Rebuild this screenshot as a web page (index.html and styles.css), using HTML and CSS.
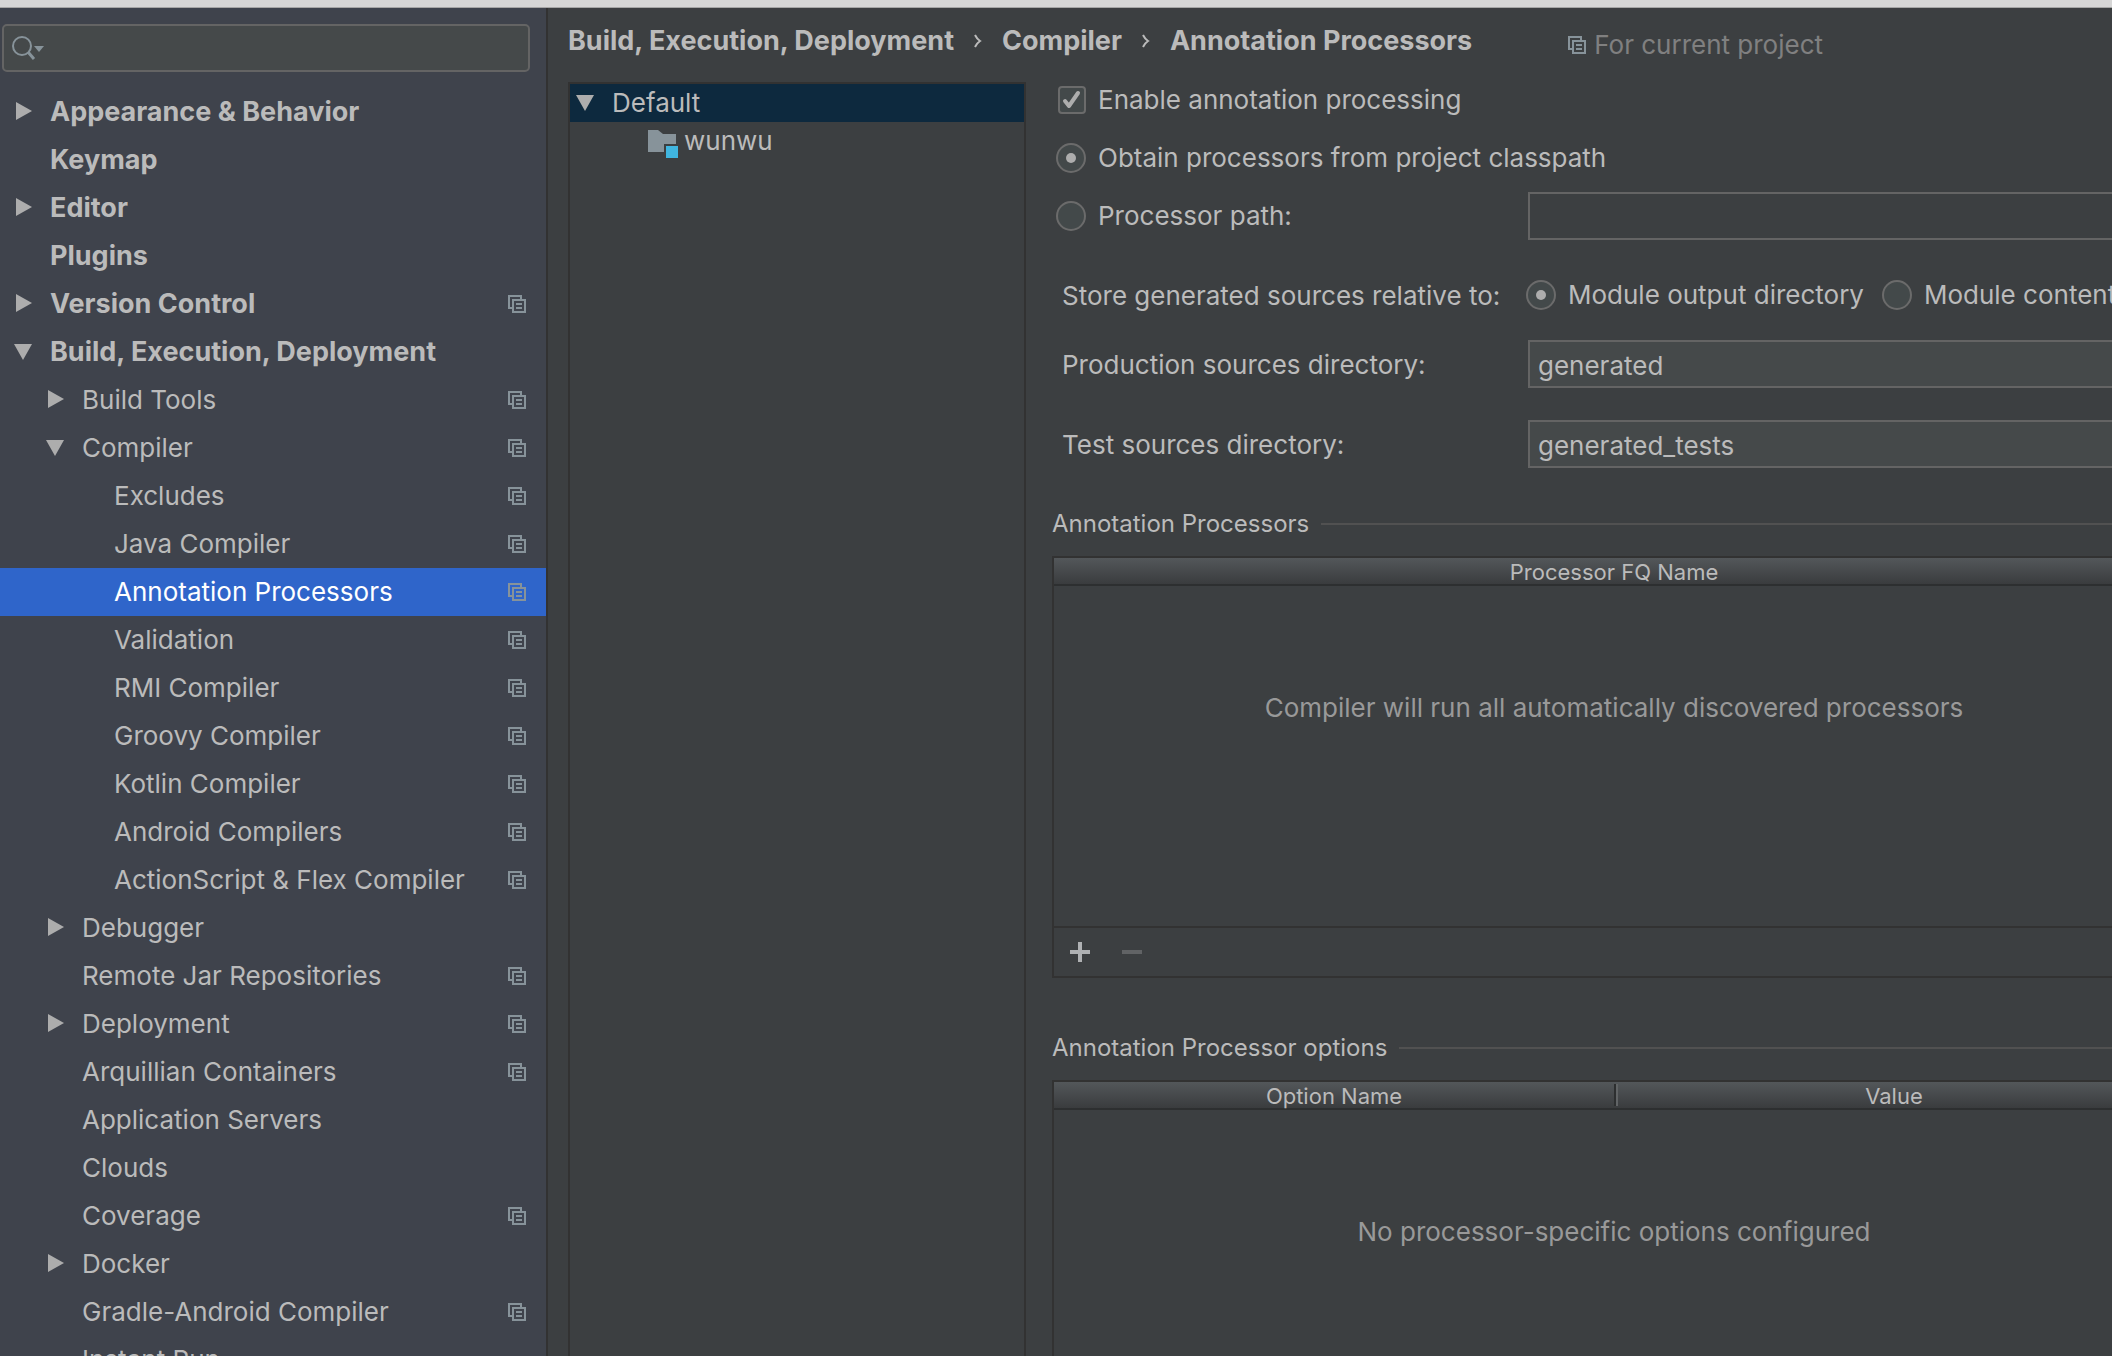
FILE: index.html
```html
<!DOCTYPE html>
<html lang="en">
<head>
<meta charset="utf-8">
<title>Preferences</title>
<link rel="stylesheet" href="styles.css">
</head>
<body>
<svg class="defs" aria-hidden="true">
  <symbol id="right" viewBox="0 0 20 20"><path d="M2 0L18 9L2 18Z" fill="#adadad"/></symbol>
  <symbol id="down" viewBox="0 0 20 20"><path d="M0 2H18L9 18Z" fill="#adadad"/></symbol>
  <symbol id="copy" viewBox="0 0 18 18"><path d="M4 13H1V1H13V4M5 5H17V17H5ZM8 9H14M8 13H14" fill="none" stroke="currentColor" stroke-width="2"/></symbol>
  <symbol id="chevron" viewBox="0 0 8 14"><path d="M1 1Q3 5 6 7Q3 9 1 13" fill="none" stroke="#bbbbbb" stroke-width="2"/></symbol>
</svg>
<div class="titlebar"></div>
<div class="window">
  <aside class="sidebar">
    <div class="search">
      <svg class="search-icon" viewBox="0 0 32 26" aria-hidden="true"><circle cx="10" cy="11" r="9" fill="none" stroke="#87939a" stroke-width="2"/><path d="M16 17L22 24" stroke="#87939a" stroke-width="3"/><path d="M22 11H32L27 17Z" fill="#87939a"/></svg>
      <input class="search-input" type="text" aria-label="Search settings">
    </div>
    <nav class="tree" aria-label="Settings">
      <a class="item top" href="#"><svg class="arrow"><use href="#right"/></svg><span>Appearance &amp; Behavior</span></a>
      <a class="item top" href="#"><i class="arrow"></i><span>Keymap</span></a>
      <a class="item top" href="#"><svg class="arrow"><use href="#right"/></svg><span>Editor</span></a>
      <a class="item top" href="#"><i class="arrow"></i><span>Plugins</span></a>
      <a class="item top" href="#"><svg class="arrow"><use href="#right"/></svg><span>Version Control</span><svg class="copy"><use href="#copy"/></svg></a>
      <a class="item top" href="#"><svg class="arrow"><use href="#down"/></svg><span>Build, Execution, Deployment</span></a>
      <a class="item child" href="#"><svg class="arrow"><use href="#right"/></svg><span>Build Tools</span><svg class="copy"><use href="#copy"/></svg></a>
      <a class="item child" href="#"><svg class="arrow"><use href="#down"/></svg><span>Compiler</span><svg class="copy"><use href="#copy"/></svg></a>
      <a class="item leaf" href="#"><span>Excludes</span><svg class="copy"><use href="#copy"/></svg></a>
      <a class="item leaf" href="#"><span>Java Compiler</span><svg class="copy"><use href="#copy"/></svg></a>
      <a class="item leaf selected" href="#" aria-current="page"><span>Annotation Processors</span><svg class="copy"><use href="#copy"/></svg></a>
      <a class="item leaf" href="#"><span>Validation</span><svg class="copy"><use href="#copy"/></svg></a>
      <a class="item leaf" href="#"><span>RMI Compiler</span><svg class="copy"><use href="#copy"/></svg></a>
      <a class="item leaf" href="#"><span>Groovy Compiler</span><svg class="copy"><use href="#copy"/></svg></a>
      <a class="item leaf" href="#"><span>Kotlin Compiler</span><svg class="copy"><use href="#copy"/></svg></a>
      <a class="item leaf" href="#"><span>Android Compilers</span><svg class="copy"><use href="#copy"/></svg></a>
      <a class="item leaf" href="#"><span>ActionScript &amp; Flex Compiler</span><svg class="copy"><use href="#copy"/></svg></a>
      <a class="item child" href="#"><svg class="arrow"><use href="#right"/></svg><span>Debugger</span></a>
      <a class="item child" href="#"><i class="arrow"></i><span>Remote Jar Repositories</span><svg class="copy"><use href="#copy"/></svg></a>
      <a class="item child" href="#"><svg class="arrow"><use href="#right"/></svg><span>Deployment</span><svg class="copy"><use href="#copy"/></svg></a>
      <a class="item child" href="#"><i class="arrow"></i><span>Arquillian Containers</span><svg class="copy"><use href="#copy"/></svg></a>
      <a class="item child" href="#"><i class="arrow"></i><span>Application Servers</span></a>
      <a class="item child" href="#"><i class="arrow"></i><span>Clouds</span></a>
      <a class="item child" href="#"><i class="arrow"></i><span>Coverage</span><svg class="copy"><use href="#copy"/></svg></a>
      <a class="item child" href="#"><svg class="arrow"><use href="#right"/></svg><span>Docker</span></a>
      <a class="item child" href="#"><i class="arrow"></i><span>Gradle-Android Compiler</span><svg class="copy"><use href="#copy"/></svg></a>
      <a class="item child" href="#"><i class="arrow"></i><span>Instant Run</span></a>
    </nav>
  </aside>
  <main class="main">
    <header class="header">
      <h1 class="crumbs"><span>Build, Execution, Deployment</span><svg class="chevron"><use href="#chevron"/></svg><span>Compiler</span><svg class="chevron"><use href="#chevron"/></svg><span>Annotation Processors</span></h1>
      <p class="scope"><svg class="scope-icon"><use href="#copy"/></svg><span>For current project</span></p>
    </header>
    <div class="content">
      <ul class="profiles">
        <li class="profile active"><svg class="arrow"><use href="#down"/></svg><span>Default</span></li>
        <li class="profile module"><svg class="folder" viewBox="0 0 30 28" aria-hidden="true"><path d="M0 0H10L15 4H28V14H16V22H0Z" fill="#87939a"/><path d="M18 16H30V28H18Z" fill="#40b6e0"/></svg><span>wunwu</span></li>
      </ul>
      <form class="form">
        <label class="choice"><input class="check" type="checkbox" checked><span>Enable annotation processing</span></label>
        <label class="choice"><input class="radio" type="radio" name="source" checked><span>Obtain processors from project classpath</span></label>
        <div class="field">
          <label class="choice"><input class="radio" type="radio" name="source"><span>Processor path:</span></label>
          <input class="text" type="text" aria-label="Processor path" disabled>
        </div>
        <div class="field store" role="radiogroup" aria-labelledby="store">
          <span class="label" id="store">Store generated sources relative to:</span>
          <div class="pair">
            <label class="choice"><input class="radio" type="radio" name="relative" checked><span>Module output directory</span></label>
            <label class="choice"><input class="radio" type="radio" name="relative"><span>Module content root</span></label>
          </div>
        </div>
        <div class="field production">
          <label class="label" for="production">Production sources directory:</label>
          <input class="text" id="production" type="text" value="generated">
        </div>
        <div class="field test">
          <label class="label" for="test">Test sources directory:</label>
          <input class="text" id="test" type="text" value="generated_tests">
        </div>
        <section class="group">
          <h2 class="group-title">Annotation Processors</h2>
          <div class="panel">
            <table class="table">
              <thead><tr><th>Processor FQ Name</th></tr></thead>
              <tbody><tr><td>Compiler will run all automatically discovered processors</td></tr></tbody>
            </table>
            <div class="toolbar">
              <button class="tool" type="button" aria-label="Add"><svg viewBox="0 0 20 20"><path d="M0 10H20M10 0V20" stroke="#afb1b3" stroke-width="4"/></svg></button>
              <button class="tool" type="button" aria-label="Remove" disabled><svg viewBox="0 0 20 20"><path d="M0 10H20" stroke="#616365" stroke-width="4"/></svg></button>
            </div>
          </div>
        </section>
        <section class="group">
          <h2 class="group-title">Annotation Processor options</h2>
          <div class="panel">
            <table class="table">
              <thead><tr><th>Option Name</th><th>Value</th></tr></thead>
              <tbody><tr><td colspan="2">No processor-specific options configured</td></tr></tbody>
            </table>
          </div>
        </section>
      </form>
    </div>
  </main>
</div>
</body>
</html>
```
FILE: styles.css
```css
* { box-sizing: border-box; }

body {
  display: flex;
  flex-direction: column;
  height: 100vh;
  margin: 0;
  overflow: hidden;
  background: #3c3f41;
  color: #bbbbbb;
  font: 26px/32px Inter, "Liberation Sans", sans-serif;
}

.defs { position: absolute; width: 0; height: 0; }
h1, h2, p, ul { margin: 0; padding: 0; font: inherit; list-style: none; }
svg { display: block; flex: none; }

.titlebar {
  flex: none;
  height: 8px;
  background: #d6d6d6;
  border-bottom: 1px solid #a6a6a6;
}

.window { display: flex; flex: 1; min-height: 0; overflow: hidden; }

/* Sidebar */
.sidebar {
  flex: none;
  width: 548px;
  overflow: hidden;
  padding-top: 16px;
  background: #3f434c;
  border-right: 2px solid #323232;
}

.search {
  display: flex;
  align-items: center;
  gap: 8px;
  height: 48px;
  margin: 0 16px 16px 2px;
  padding: 0 8px;
  background: #45494a;
  border: 2px solid #646464;
  border-radius: 5px;
}
.search-icon { width: 32px; height: 26px; }
.search-input { flex: 1; border: 0; outline: 0; background: none; color: inherit; font: inherit; }

.item {
  display: flex;
  align-items: center;
  gap: 16px;
  height: 48px;
  padding: 0 20px 0 14px;
  color: inherit;
  text-decoration: none;
  white-space: nowrap;
}
.top { font-size: 27px; font-weight: 700; }
.child { padding-left: 46px; }
.leaf { padding-left: 114px; }
.selected { background: #2f65ca; color: #ffffff; }
.arrow { flex: none; width: 20px; height: 20px; }
.copy { width: 18px; height: 18px; margin-left: auto; color: #87939a; }

/* Main area */
.main { flex: 1; min-width: 0; padding-left: 20px; }

.header { display: flex; align-items: center; gap: 96px; height: 74px; white-space: nowrap; }
.crumbs { display: flex; align-items: center; gap: 20px; padding-bottom: 8px; font-size: 27px; font-weight: 700; }
.chevron { width: 8px; height: 14px; }
.scope { display: flex; align-items: center; gap: 8px; color: #808080; }
.scope-icon { width: 18px; height: 18px; color: #87939a; }

.content { display: flex; align-items: stretch; gap: 26px; }

.profiles { flex: none; width: 458px; border: 2px solid #323232; }
.profile { display: flex; align-items: center; gap: 16px; height: 38px; padding-left: 6px; }
.active { background: #0d293e; }
.module { gap: 6px; padding-left: 78px; }
.folder { width: 30px; height: 28px; margin-top: 6px; }

/* The form is wider than the window and runs off its right edge. */
.form {
  display: flex;
  flex: 1;
  flex-direction: column;
  gap: 10px;
  min-width: 0;
  margin: -6px -64px 0 0;
  white-space: nowrap;
}
.form > .choice, .field { padding-left: 4px; }
.choice { display: flex; align-items: center; gap: 12px; min-height: 48px; }
.field { display: grid; grid-template-columns: 472px 1fr; align-items: center; }
.field .label { padding: 2px 0 0 6px; }
.store { margin-top: 21px; }
.production { margin-top: 11px; }
.test { margin-top: 22px; }
.pair { display: flex; gap: 18px; margin-left: -2px; }

.check, .radio {
  display: grid;
  flex: none;
  place-items: center;
  width: 30px;
  height: 30px;
  margin: 0;
  appearance: none;
  background: #43494a;
  border: 2px solid #6b6b6b;
  border-radius: 50%;
}
.check { width: 28px; height: 28px; margin: 0 0 0 2px; border-radius: 4px; }
.radio:checked::after { content: ""; width: 10px; height: 10px; border-radius: 50%; background: #adadad; }
.check:checked {
  background-image: url("data:image/svg+xml,%3Csvg xmlns='http://www.w3.org/2000/svg' viewBox='0 0 28 28'%3E%3Cpath d='M7 15L11 20L20 7' fill='none' stroke='%23adadad' stroke-width='4' stroke-linecap='round' stroke-linejoin='round'/%3E%3C/svg%3E");
  background-origin: border-box;
}

.text {
  width: 100%;
  height: 48px;
  padding: 2px 8px 0;
  background: #45494a;
  border: 2px solid #646464;
  border-radius: 0;
  outline: 0;
  color: inherit;
  font: inherit;
}
.text:disabled { background: transparent; }

.group { margin-top: 30px; }
.group-title {
  display: flex;
  align-items: center;
  gap: 12px;
  height: 32px;
  margin-bottom: 16px;
  font-size: 24px;
}
.group-title::after { content: ""; flex: 1; height: 2px; background: #515151; }

.panel { border: 2px solid #323232; }
.table { width: 100%; table-layout: fixed; border-collapse: separate; border-spacing: 0; }
.table th {
  height: 28px;
  padding: 2px 0 0;
  background: linear-gradient(#53575a, #3a3c3e);
  border-bottom: 2px solid #2d2f30;
  font-size: 22px;
  font-weight: 400;
  line-height: 24px;
}
.table th + th { background: linear-gradient(#2d2f30, #2d2f30) 0 2px / 2px 22px no-repeat, linear-gradient(#616466, #616466) 2px 2px / 2px 22px no-repeat, linear-gradient(#53575a, #3a3c3e); }
.table td { height: 340px; padding: 106px 0 0; color: #999999; text-align: center; vertical-align: top; }

.toolbar { display: flex; gap: 32px; height: 50px; padding: 14px 16px; border-top: 2px solid #323232; }
.tool { width: 20px; height: 20px; padding: 0; border: 0; background: none; }
.group + .group { margin-top: 44px; }
```
